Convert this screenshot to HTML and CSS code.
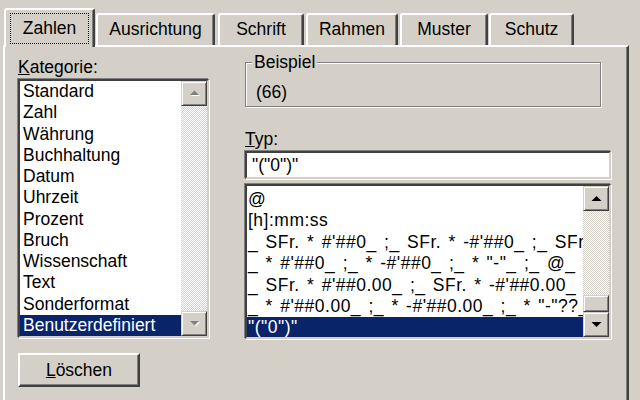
FILE: index.html
```html
<!DOCTYPE html>
<html lang="de">
<head>
    <meta charset="UTF-8">
    <title>Zellen formatieren</title>
    <link rel="stylesheet" href="styles.css">
</head>
<body>
    <div class="dialog">
        <div class="tabs">
            <div class="tab active"><span class="focus">Zahlen</span></div>
            <div class="tab">Ausrichtung</div>
            <div class="tab">Schrift</div>
            <div class="tab">Rahmen</div>
            <div class="tab">Muster</div>
            <div class="tab">Schutz</div>
        </div>
        <div class="page">
            <div class="col-left">
                <div class="label"><u>K</u>ategorie:</div>
                <div class="listbox cat-list">
                    <ul class="items">
                        <li>Standard</li>
                        <li>Zahl</li>
                        <li>Währung</li>
                        <li>Buchhaltung</li>
                        <li>Datum</li>
                        <li>Uhrzeit</li>
                        <li>Prozent</li>
                        <li>Bruch</li>
                        <li>Wissenschaft</li>
                        <li>Text</li>
                        <li>Sonderformat</li>
                        <li class="selected">Benutzerdefiniert</li>
                    </ul>
                    <div class="scrollbar">
                        <div class="sbtn">
                            <svg class="arrow disabled" width="11" height="7" viewBox="0 0 11 7"><path class="hl" d="M2 6h9L6.5 1.5z"/><path d="M1 5h9L5.5 0.5z"/></svg>
                        </div>
                        <div class="track"></div>
                        <div class="sbtn">
                            <svg class="arrow disabled" width="11" height="7" viewBox="0 0 11 7"><path class="hl" d="M2 2h9L6.5 6.5z"/><path d="M1 1h9L5.5 5.5z"/></svg>
                        </div>
                    </div>
                </div>
                <button class="btn"><u>L</u>öschen</button>
            </div>
            <div class="col-right">
                <fieldset class="group">
                    <legend>Beispiel</legend>
                    <div class="sample">(66)</div>
                </fieldset>
                <div class="label typ-label"><u>T</u>yp:</div>
                <input class="field" type="text" value='"("0")"'>
                <div class="listbox type-list">
                    <ul class="items">
                        <li>@</li>
                        <li>[h]:mm:ss</li>
                        <li>_ SFr. * #'##0_ ;_ SFr. * -#'##0_ ;_ SFr. * "-"_ ;_ @_ </li>
                        <li>_ * #'##0_ ;_ * -#'##0_ ;_ * "-"_ ;_ @_ </li>
                        <li>_ SFr. * #'##0.00_ ;_ SFr. * -#'##0.00_ ;_ SFr. * "-"??_ ;_ @_ </li>
                        <li>_ * #'##0.00_ ;_ * -#'##0.00_ ;_ * "-"??_ ;_ @_ </li>
                        <li class="selected">"("0")"</li>
                    </ul>
                    <div class="scrollbar">
                        <div class="sbtn">
                            <svg class="arrow" width="11" height="7" viewBox="0 0 11 7"><path d="M0.5 6h10L5.5 1z"/></svg>
                        </div>
                        <div class="track">
                            <div class="thumb"></div>
                        </div>
                        <div class="sbtn">
                            <svg class="arrow" width="11" height="7" viewBox="0 0 11 7"><path d="M0.5 1h10L5.5 6z"/></svg>
                        </div>
                    </div>
                </div>
            </div>
        </div>
    </div>
</body>
</html>
```

FILE: styles.css
```css
body {
    margin: 0;
    background-color: #d4d0c8;
    font-family: "Liberation Sans", Arial, sans-serif;
    font-size: 17.5px;
    color: #000;
    overflow: hidden;
}

.dialog {
    padding: 8px 0 0 3px;
}

/* tab strip */
.tabs {
    display: flex;
    align-items: flex-end;
    height: 37px;
    position: relative;
    z-index: 1;
}

.tab {
    box-sizing: border-box;
    height: 32px;
    border: 2px solid #fff;
    border-bottom: none;
    border-right-color: #404040;
    border-radius: 3px 3px 0 0;
    box-shadow: inset -1px 0 #808080;
    display: flex;
    align-items: center;
    justify-content: center;
    line-height: 20px;
    padding-bottom: 2px;
}

.tab.active {
    width: 91px;
    height: 39px;
    margin-left: 1px;
    margin-bottom: -2px;
    background-color: #d4d0c8;
    align-items: flex-start;
    padding-top: 4px;
}

.focus {
    outline: 1px dotted #000;
    padding: 4px 12px 5px;
}

.tab:nth-child(2) { width: 119px; margin-left: 1px; }
.tab:nth-child(3) { width: 86px; margin-left: 3px; }
.tab:nth-child(4) { width: 92px; margin-left: 2px; }
.tab:nth-child(5) { width: 88px; margin-left: 2px; }
.tab:nth-child(6) { width: 85px; margin-left: 1px; }

/* page body */
.page {
    box-sizing: border-box;
    width: 626px;
    height: 360px;
    border-top: 2px solid #fff;
    border-left: 2px solid #fff;
    border-right: 2px solid #404040;
    box-shadow: inset -1px 0 #808080;
    display: flex;
    gap: 36px;
    padding: 10px 0 0 13px;
}

.col-left {
    width: 191px;
    display: flex;
    flex-direction: column;
}

.col-right {
    width: 366px;
    margin-top: -5px;
    display: flex;
    flex-direction: column;
}

.label {
    line-height: 20px;
}

/* sunken list boxes */
.listbox {
    box-sizing: border-box;
    background-color: #fff;
    border: 2px solid;
    border-color: #404040 #d4d0c8 #d4d0c8 #404040;
    box-shadow: -1px -1px 0 #808080, 1px 1px 0 #fff;
    display: flex;
    overflow: hidden;
}

.items {
    list-style: none;
    margin: 0;
    padding: 0;
    flex: 1;
    min-width: 0;
    overflow: hidden;
}

.items li {
    padding-left: 3px;
    white-space: nowrap;
    overflow: hidden;
}

.items li.selected {
    background-color: #0a246a;
    color: #fff;
}

.cat-list {
    margin-top: 2px;
    height: 259px;
}

.cat-list .items li {
    line-height: 21.25px;
}

.type-list {
    margin-top: 5px;
    height: 155px;
}

.type-list .items {
    padding-top: 3px;
}

.type-list .items li {
    padding-left: 1px;
    line-height: 21.4px;
    letter-spacing: 0.5px;
    word-spacing: 2px;
}

/* scrollbars */
.scrollbar {
    width: 26px;
    display: flex;
    flex-direction: column;
}

.sbtn, .thumb {
    box-sizing: border-box;
    background-color: #d4d0c8;
    border: 1px solid;
    border-color: #d4d0c8 #404040 #404040 #d4d0c8;
    box-shadow: inset 1px 1px #fff, inset -1px -1px #808080;
}

.sbtn {
    height: 25px;
    display: flex;
    align-items: center;
    justify-content: center;
}

.track {
    flex: 1;
    display: flex;
    flex-direction: column;
    justify-content: flex-end;
    background: repeating-conic-gradient(#fff 0 25%, #d4d0c8 0 50%) 0 0 / 2px 2px;
}

.thumb {
    height: 17px;
}

.arrow path {
    fill: #000;
}

.arrow.disabled path {
    fill: #808080;
}

.arrow.disabled path.hl {
    fill: #fff;
}

/* group box */
.group {
    box-sizing: border-box;
    width: 356px;
    margin: 0;
    padding: 0 8px 4px 6px;
    border: 1px solid #808080;
    box-shadow: inset 1px 1px #fff, 1px 1px #fff;
}

.group legend {
    padding: 0 2px;
    line-height: 20px;
    background-color: #d4d0c8;
}

.sample {
    margin-top: 10px;
    padding-left: 4px;
    line-height: 20px;
}

.typ-label {
    margin-top: 22px;
}

.field {
    box-sizing: border-box;
    width: 366px;
    height: 28px;
    margin: 2px 0 0;
    padding: 0 5px;
    font-family: inherit;
    font-size: inherit;
    color: #000;
    background-color: #fff;
    border: 2px solid;
    border-color: #404040 #d4d0c8 #d4d0c8 #404040;
    box-shadow: -1px -1px 0 #808080, 1px 1px 0 #fff;
    outline: none;
}

/* push button */
.btn {
    box-sizing: border-box;
    width: 122px;
    height: 34px;
    margin-top: 15px;
    padding: 0;
    font-family: inherit;
    font-size: inherit;
    color: #000;
    background-color: #d4d0c8;
    border: 2px solid;
    border-color: #fff #404040 #404040 #fff;
    box-shadow: inset -1px -1px #808080;
}
```
